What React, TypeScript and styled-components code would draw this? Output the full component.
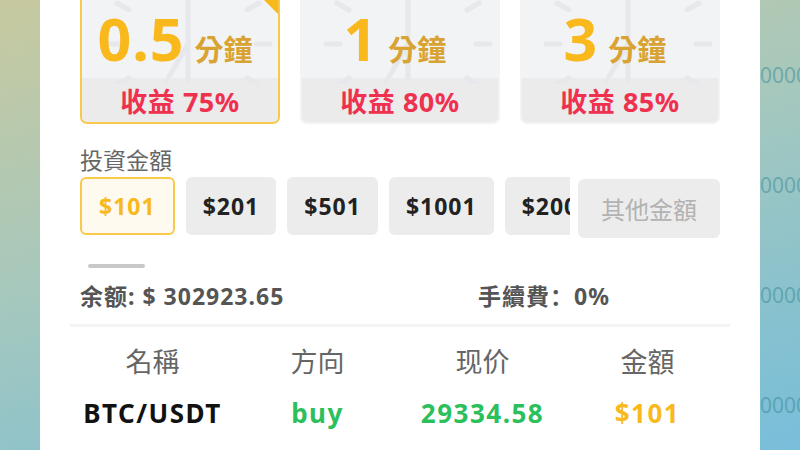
import React from "react";
import styled, { createGlobalStyle } from "styled-components";

const GlobalStyle = createGlobalStyle`
  html, body {
    margin: 0;
    padding: 0;
    width: 100%;
    height: 100%;
    overflow: hidden;
  }
  body {
    font-family: "Noto Sans", "Noto Sans CJK SC", sans-serif;
  }
  * { box-sizing: border-box; }
`;

const Page = styled.div`
  position: relative;
  width: 800px;
  height: 450px;
  overflow: hidden;
  display: flex;
  justify-content: center;
  background: linear-gradient(165deg, #c7c99f 0%, #a6c8bd 45%, #86c1cf 80%, #79bedb 100%);
`;

const AxisLabels = styled.div`
  position: absolute;
  top: 62px;
  left: 748px;
  display: flex;
  flex-direction: column;
  gap: 84px;
`;

const AxisLabel = styled.span`
  font-family: "Noto Sans", sans-serif;
  font-size: 21px;
  line-height: 26px;
  color: rgba(60, 140, 152, 0.55);
  white-space: nowrap;
`;

const Panel = styled.div`
  position: relative;
  z-index: 1;
  width: 720px;
  height: 100%;
  background: #ffffff;
  padding: 0 40px;
  display: flex;
  flex-direction: column;
`;

const CardRow = styled.div`
  display: grid;
  grid-template-columns: repeat(3, 200px);
  gap: 20px;
  margin-top: -8px;
`;

const Card = styled.div<{ $active?: boolean }>`
  position: relative;
  height: 132px;
  border-radius: 7px;
  overflow: hidden;
  background: #f2f3f5;
  border: 2px solid ${({ $active }) => ($active ? "#f9c94c" : "transparent")};
  display: flex;
  flex-direction: column;
`;

const Corner = styled.div`
  position: absolute;
  top: 0;
  right: 0;
  width: 0;
  height: 0;
  border-top: 20px solid #f8b91c;
  border-left: 20px solid transparent;
`;

const CardTop = styled.div`
  position: relative;
  flex: 1;
  display: flex;
  justify-content: center;
  align-items: baseline;
  padding: 4px 10px 0 0;
`;

const ClockMark = styled.svg`
  position: absolute;
  left: 0;
  top: 0;
`;

const Minutes = styled.span`
  position: relative;
  font-size: 59px;
  font-weight: 700;
  letter-spacing: 1px;
  line-height: 80px;
  color: #f9b81b;
`;

const Unit = styled.span`
  position: relative;
  margin-left: 10px;
  font-family: "Noto Sans CJK TC", "Noto Sans CJK SC", sans-serif;
  font-size: 29px;
  font-weight: 700;
  color: #d9a333;
`;

const CardBottom = styled.div`
  height: 44px;
  background: #ebebeb;
  display: flex;
  align-items: center;
  justify-content: center;
  font-size: 27px;
  font-weight: 700;
  letter-spacing: 0.5px;
  color: #ef3150;
`;

const FieldLabel = styled.div`
  margin-top: 20px;
  font-family: "Noto Sans CJK TC", "Noto Sans CJK SC", sans-serif;
  font-size: 23px;
  line-height: 30px;
  color: #666666;
`;

const AmountRow = styled.div`
  display: flex;
  gap: 8px;
  margin-top: 3px;
`;

const AmountScroll = styled.div`
  width: 490px;
  overflow: hidden;
  display: flex;
  gap: 11px;
`;

const AmountButton = styled.div<{ $active?: boolean }>`
  flex: none;
  height: 58px;
  padding: 0 17px;
  border-radius: 6px;
  display: flex;
  align-items: center;
  font-size: 23px;
  font-weight: 700;
  letter-spacing: 1px;
  color: ${({ $active }) => ($active ? "#f8b91c" : "#222222")};
  background: ${({ $active }) => ($active ? "#fffaf0" : "#ececec")};
  border: ${({ $active }) => ($active ? "2px solid #f9c94c" : "none")};
`;

const OtherButton = styled.div`
  width: 142px;
  height: 59px;
  margin-top: 2px;
  border-radius: 6px;
  background: #ececec;
  display: flex;
  align-items: center;
  justify-content: center;
  font-family: "Noto Sans CJK TC", "Noto Sans CJK SC", sans-serif;
  font-size: 24px;
  color: #b2b2b2;
`;

const ScrollThumb = styled.div`
  width: 57px;
  height: 4px;
  margin: 26px 0 0 8px;
  border-radius: 2px;
  background: #c8c8c8;
`;

const InfoRow = styled.div`
  display: grid;
  grid-template-columns: 398px auto;
  margin-top: 13px;
  font-size: 23px;
  font-weight: 700;
  letter-spacing: 1px;
  line-height: 30px;
  color: #555555;
`;

const Divider = styled.div`
  height: 3px;
  margin: 13px -10px 0;
  background: #f4f4f4;
`;

const Table = styled.div`
  margin: 0 -10px;
  display: grid;
  grid-template-columns: repeat(4, 1fr);
  text-align: center;
`;

const HeadCell = styled.div`
  padding-top: 16px;
  font-family: "Noto Sans CJK TC", "Noto Sans CJK SC", sans-serif;
  font-size: 27px;
  line-height: 36px;
  color: #666666;
`;

const Cell = styled.div<{ $tone: "dark" | "green" | "gold" }>`
  padding-top: 17px;
  font-size: 26px;
  font-weight: 700;
  letter-spacing: 1.5px;
  line-height: 34px;
  color: ${({ $tone }) =>
    $tone === "green" ? "#2bc05c" : $tone === "gold" ? "#f8b91c" : "#111111"};
`;

const Clock = () => {
  const cx = 106;
  const cy = 50;
  const ticks = Array.from({ length: 12 }, (_, i) => {
    const a = (i * Math.PI) / 6;
    return {
      x1: cx + Math.sin(a) * 68,
      y1: cy - Math.cos(a) * 68,
      x2: cx + Math.sin(a) * 82,
      y2: cy - Math.cos(a) * 82,
    };
  });
  return (
    <ClockMark width="200" height="90" viewBox="0 0 200 90">
      <g stroke="#e7e8eb" strokeWidth="5" strokeLinecap="round" fill="none">
        {ticks.map((t, i) => (
          <line key={i} x1={t.x1} y1={t.y1} x2={t.x2} y2={t.y2} />
        ))}
        <line x1={cx} y1={cy + 36} x2={cx} y2={cy - 62} />
        <line x1={cx} y1={cy} x2={cx - 22} y2={cy + 38} />
      </g>
    </ClockMark>
  );
};

const durations = [
  { time: "0.5", rate: "75%", active: true },
  { time: "1", rate: "80%" },
  { time: "3", rate: "85%" },
];

const amounts = ["$101", "$201", "$501", "$1001", "$2001"];

export default function App() {
  return (
    <>
      <GlobalStyle />
      <Page>
        <AxisLabels>
          {["300000", "200000", "100000", "000000"].map((l) => (
            <AxisLabel key={l}>{l}</AxisLabel>
          ))}
        </AxisLabels>
        <Panel>
          <CardRow>
            {durations.map((d) => (
              <Card key={d.time} $active={d.active}>
                <CardTop>
                  <Clock />
                  <Minutes>{d.time}</Minutes>
                  <Unit>分鐘</Unit>
                </CardTop>
                <CardBottom>收益 {d.rate}</CardBottom>
                {d.active && <Corner />}
              </Card>
            ))}
          </CardRow>

          <FieldLabel>投資金額</FieldLabel>
          <AmountRow>
            <AmountScroll>
              {amounts.map((a, i) => (
                <AmountButton key={a} $active={i === 0}>
                  {a}
                </AmountButton>
              ))}
            </AmountScroll>
            <OtherButton>其他金額</OtherButton>
          </AmountRow>
          <ScrollThumb />

          <InfoRow>
            <span>余额: $ 302923.65</span>
            <span>手續費：0%</span>
          </InfoRow>
          <Divider />

          <Table>
            <HeadCell>名稱</HeadCell>
            <HeadCell>方向</HeadCell>
            <HeadCell>现价</HeadCell>
            <HeadCell>金額</HeadCell>
            <Cell $tone="dark">BTC/USDT</Cell>
            <Cell $tone="green">buy</Cell>
            <Cell $tone="green">29334.58</Cell>
            <Cell $tone="gold">$101</Cell>
          </Table>
        </Panel>
      </Page>
    </>
  );
}
